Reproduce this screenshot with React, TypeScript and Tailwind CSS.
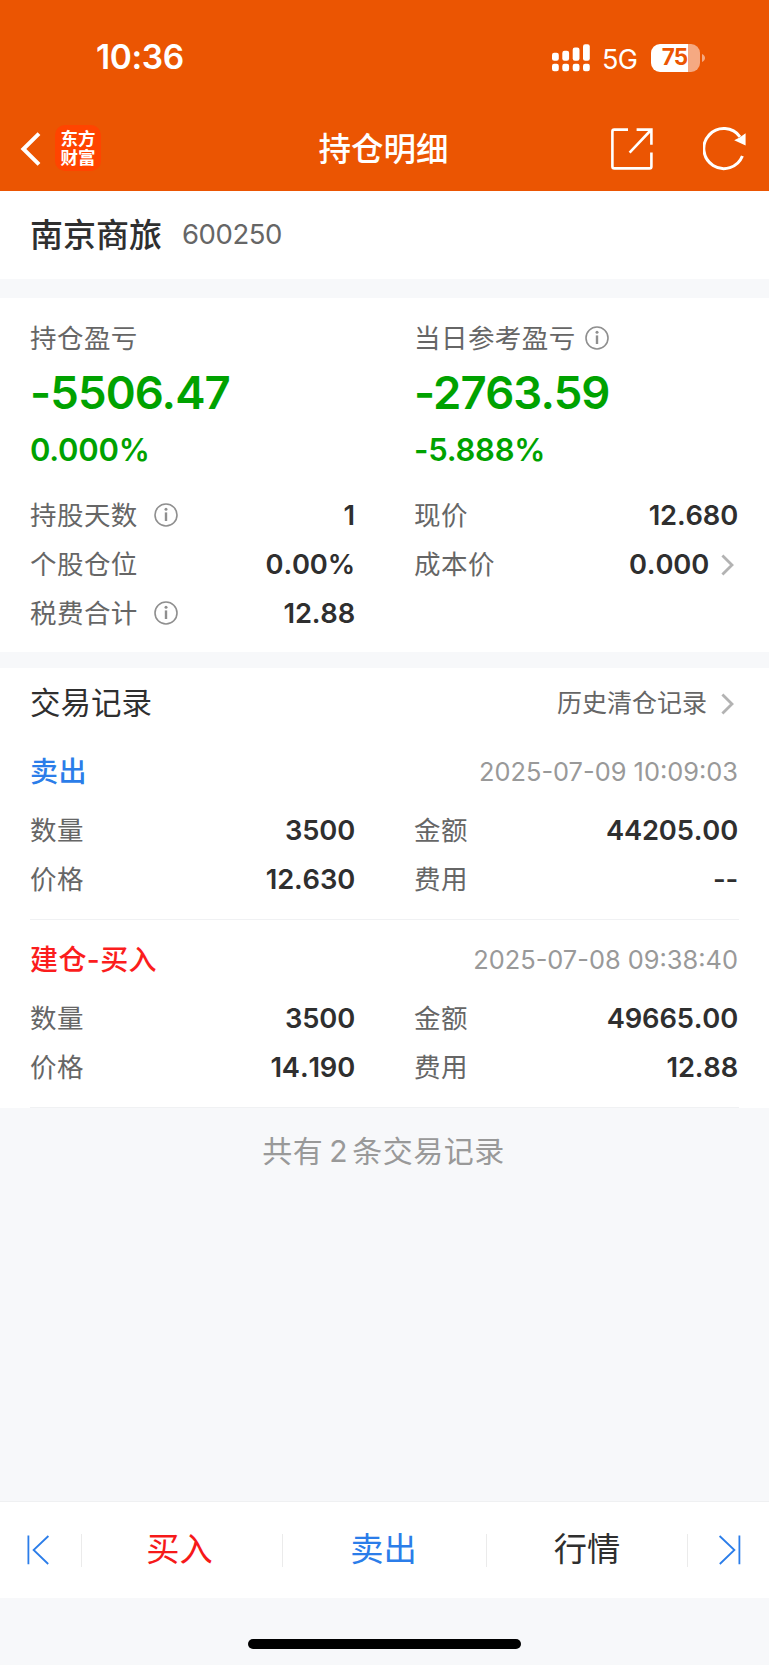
import type { ReactNode } from "react";

function InfoIcon() {
  return (
    <svg width="24" height="24" viewBox="0 0 24 24" fill="none" stroke="#8f8f8f">
      <circle cx="12" cy="12" r="11" strokeWidth="1.6" />
      <path d="M12 9.4V18" strokeWidth="2.4" />
      <circle cx="12" cy="6.2" r="1.5" fill="#8f8f8f" stroke="none" />
    </svg>
  );
}

function ChevronRight() {
  return (
    <svg width="13" height="22" viewBox="0 0 13 22" fill="none" stroke="#b3b3b3" strokeWidth="2.8">
      <path d="M1.4 1.4L11 11L1.4 20.6" />
    </svg>
  );
}

function StatusBar() {
  const bars = [
    { x: 0, y: 8.7, h: 8 },
    { x: 10.3, y: 6.7, h: 10 },
    { x: 20.7, y: 3.5, h: 13.2 },
    { x: 31, y: 0.3, h: 16.4 },
  ];
  return (
    <div className="flex h-[107px] items-center pl-[96px] pr-[64px] pt-[9px] text-white">
      <span className="text-[33.5px] font-semibold tracking-[-0.4px]">10:36</span>
      <svg className="mb-[1px] ml-auto" width="38" height="28" viewBox="0 0 38 28" fill="#fff">
        {bars.map((b) => (
          <g key={b.x}>
            <rect x={b.x} y={b.y} width="6.8" height={b.h} rx="2.2" />
            <rect x={b.x} y="19.8" width="6.8" height="7.4" rx="2.2" />
          </g>
        ))}
      </svg>
      <span className="ml-[12px] mt-[2px] w-[36px] text-[27px] tracking-[-0.6px]">5G</span>
      <div className="mb-[1px] ml-[13px] flex items-center">
        <div className="flex h-[28px] w-[49px] items-center justify-center rounded-[9px] bg-[linear-gradient(90deg,#fff_75%,#f5a982_75%)] pr-[2px] text-[22.5px] font-bold tracking-[-0.8px] text-[#eb5502]">
          75
        </div>
        <svg className="ml-[2px]" width="3" height="8" viewBox="0 0 3 8" fill="#f5a982">
          <path d="M0 0C4 1.5 4 6.5 0 8Z" />
        </svg>
      </div>
    </div>
  );
}

function NavBar() {
  return (
    <div className="grid h-[84px] grid-cols-[1fr_auto_1fr] items-center pl-[20px] pr-[22px] text-white">
      <div className="flex items-center">
        <svg className="mb-[1px]" width="21" height="34" viewBox="0 0 21 34" fill="none" stroke="#fff" strokeWidth="4">
          <path d="M19 1.6L3.4 17L19 32.4" />
        </svg>
        <div className="mb-[2px] ml-[14px] flex h-[46px] w-[46px] flex-col items-center justify-center rounded-[10px] bg-[#ff4400] pb-[1px] text-[17.5px] leading-[19px] font-bold">
          <span>东方</span>
          <span>财富</span>
        </div>
      </div>
      <h1 className="pt-[2px] text-[32.5px] font-medium">持仓明细</h1>
      <div className="flex items-center justify-end gap-[49px] pb-[1px]">
        <svg className="-translate-x-px" width="42" height="42" viewBox="0 0 42 42" fill="none" stroke="#fff" strokeWidth="2.6">
          <path d="M17 1.6H3.2Q1.4 1.6 1.4 3.4V38.4Q1.4 40.4 3.4 40.4H38.6Q40.4 40.4 40.4 38.4V24.6" />
          <path d="M25.6 1.6H40.4V16.8M40 2L18.6 24.6" />
        </svg>
        <svg width="44" height="44" viewBox="0 0 44 44" fill="none">
          <path d="M39.4 29A20 20 0 1 1 37 9.8" stroke="#fff" strokeWidth="3" />
          <path d="M42.6 6.2V18.6L31.2 13.2L36.6 10.4Z" fill="#fff" />
        </svg>
      </div>
    </div>
  );
}

function Label({ children }: { children: ReactNode }) {
  return <span className="text-[26.5px] tracking-[0.45px] text-[#666]">{children}</span>;
}

interface FieldProps {
  label: string;
  value: string;
  info?: boolean;
  link?: boolean;
}

function Field({ label, value, info, link }: FieldProps) {
  return (
    <div className="flex h-[49px] items-center">
      <Label>{label}</Label>
      {info && (
        <span className="mb-[1px] ml-[16.5px]">
          <InfoIcon />
        </span>
      )}
      <span className="ml-auto text-[27.3px] font-semibold tracking-[-0.15px] text-[#2f2f2f] [font-kerning:none]">{value}</span>
      {link && (
        <span className="ml-[12px] mr-[4px]">
          <ChevronRight />
        </span>
      )}
    </div>
  );
}

function Profit({ label, amount, percent, info }: { label: string; amount: string; percent: string; info?: boolean }) {
  return (
    <div>
      <div className="flex h-[40px] items-center">
        <Label>{label}</Label>
        {info && (
          <span className="mb-[1px] ml-[9px]">
            <InfoIcon />
          </span>
        )}
      </div>
      <div className="flex h-[68px] items-center pt-[1px] text-[45.5px] font-semibold tracking-[-0.9px] text-[#00a200]">{amount}</div>
      <div className="flex h-[46px] items-center text-[31px] font-[560] tracking-[-0.25px] text-[#00a200]">{percent}</div>
    </div>
  );
}

interface Trade {
  kind: string;
  tone: string;
  time: string;
  price: string;
  amount: string;
  fee: string;
}

const trades: Trade[] = [
  { kind: "卖出", tone: "text-[#2b7de9]", time: "2025-07-09 10:09:03", price: "12.630", amount: "44205.00", fee: "--" },
  { kind: "建仓-买入", tone: "text-[#fb1d1d]", time: "2025-07-08 09:38:40", price: "14.190", amount: "49665.00", fee: "12.88" },
];

function TradeItem({ trade }: { trade: Trade }) {
  return (
    <li className="h-[188px] border-b border-[#f0f1f3] pt-[17px]">
      <div className="flex h-[46px] items-center justify-between">
        <span className={`text-[28px] font-medium tracking-[0.4px] ${trade.tone}`}>{trade.kind}</span>
        <span className="pr-[1px] text-[25.4px] text-[#999]">{trade.time}</span>
      </div>
      <div className="mt-[11px] grid grid-cols-[325px_324px] gap-x-[59px]">
        <Field label="数量" value="3500" />
        <Field label="金额" value={trade.amount} />
        <Field label="价格" value={trade.price} />
        <Field label="费用" value={trade.fee} />
      </div>
    </li>
  );
}

function BottomBar() {
  return (
    <nav className="flex h-[97px] items-center border-t border-[#eff0f2] bg-white text-[33.3px]">
      <div className="flex h-[33px] w-[82px] items-center border-r border-[#ebebeb] pl-[26.5px]">
        <svg width="23" height="30" viewBox="0 0 23 30" fill="none" stroke="#2b7de9" strokeWidth="1.8">
          <path d="M1.4 0.5V29.3M21.4 1L6.6 15L21.2 29" />
        </svg>
      </div>
      <div className="flex h-[33px] w-[201px] items-center justify-center border-r border-[#ebebeb] pr-[5px] text-[#f61919]">买入</div>
      <div className="flex h-[33px] w-[204px] items-center justify-center border-r border-[#ebebeb] pr-[2px] text-[#2b7de9]">卖出</div>
      <div className="flex h-[33px] w-[201px] items-center justify-center border-r border-[#ebebeb] text-[#2f2f2f]">行情</div>
      <div className="flex flex-1 items-center justify-end pr-[28px]">
        <svg width="23" height="30" viewBox="0 0 23 30" fill="none" stroke="#2b7de9" strokeWidth="1.8">
          <path d="M21.4 0.5V29.3M1.6 1L16.4 15L1.8 29" />
        </svg>
      </div>
    </nav>
  );
}

export default function App() {
  return (
    <div className="flex h-[1665px] w-[769px] flex-col bg-[#f7f8fa] font-['Inter','Noto_Sans_CJK_SC',sans-serif] leading-none whitespace-nowrap">
      <header className="h-[191px] bg-[#eb5502]">
        <StatusBar />
        <NavBar />
      </header>

      <section className="flex h-[88px] items-center bg-white pl-[30px]">
        <h2 className="text-[33px] font-medium text-[#2f2f2f]">南京商旅</h2>
        <span className="ml-[20px] text-[27.5px] tracking-[-0.45px] text-[#666]">600250</span>
      </section>

      <section className="mt-[19px] h-[354px] bg-white px-[30px] pt-[20px]">
        <div className="grid grid-cols-[325px_324px] gap-x-[59px]">
          <Profit label="持仓盈亏" amount="-5506.47" percent="0.000%" />
          <Profit label="当日参考盈亏" amount="-2763.59" percent="-5.888%" info />
        </div>
        <div className="mt-[19px] grid grid-cols-[325px_324px] gap-x-[59px]">
          <Field label="持股天数" value="1" info />
          <Field label="现价" value="12.680" />
          <Field label="个股仓位" value="0.00%" />
          <Field label="成本价" value="0.000" link />
          <Field label="税费合计" value="12.88" info />
        </div>
      </section>

      <section className="mt-[16px] h-[440px] bg-white px-[30px]">
        <div className="flex h-[64px] items-center justify-between pt-[7px]">
          <h3 className="text-[30.5px] text-[#2f2f2f]">交易记录</h3>
          <div className="flex items-center gap-[14px] pr-[5px] text-[25px] text-[#666]">
            历史清仓记录
            <ChevronRight />
          </div>
        </div>
        <ul>
          {trades.map((t) => (
            <TradeItem key={t.time} trade={t} />
          ))}
        </ul>
      </section>

      <p className="mt-[21px] flex h-[44px] items-center justify-center pr-[2px] text-[30px] tracking-[0.5px] text-[#999]">
        共有<span className="mr-[4px] ml-[6px]">2</span>条交易记录
      </p>

      <div className="mt-auto">
        <BottomBar />
        <div className="flex h-[67px] justify-center pt-[41px]">
          <div className="h-[10px] w-[273px] rounded-full bg-black" />
        </div>
      </div>
    </div>
  );
}
